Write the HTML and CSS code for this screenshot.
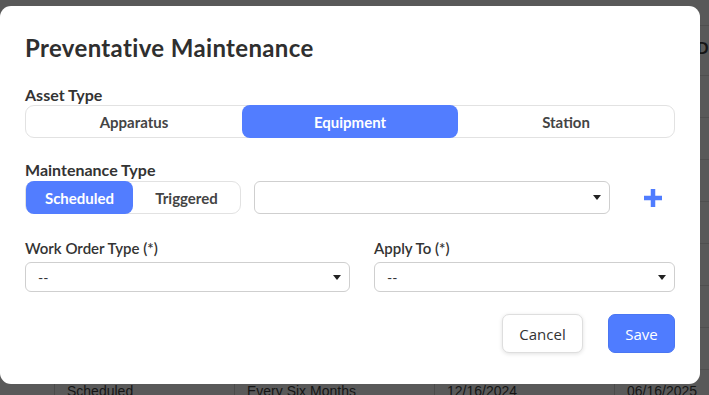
FILE: index.html
```html
<!DOCTYPE html>
<html lang="en">
<head>
    <meta charset="UTF-8">
    <meta name="viewport" content="width=device-width, initial-scale=1.0">
    <title>Preventative Maintenance</title>
    <link rel="stylesheet" href="styles.css">
</head>
<body>
    <!-- Page behind the overlay -->
    <div class="page">
        <div class="grid-head"><span class="head-cell">Due</span></div>
        <div class="grid-row"></div>
        <div class="grid-row"></div>
        <div class="grid-row"></div>
        <div class="grid-row"></div>
        <div class="grid-row"></div>
        <div class="grid-row"></div>
        <div class="grid-row"></div>
        <div class="grid-row data-row">
            <span class="cell c0"></span>
            <span class="cell c1">Scheduled</span>
            <span class="cell c2">Every Six Months</span>
            <span class="cell c3">12/16/2024</span>
            <span class="cell c4">06/16/2025</span>
        </div>
    </div>

    <div class="modal">
        <h2 class="modal-title">Preventative Maintenance</h2>

        <label class="field-label first">Asset Type</label>
        <div class="segmented">
            <button class="seg">Apparatus</button>
            <button class="seg active">Equipment</button>
            <button class="seg">Station</button>
        </div>

        <label class="field-label second">Maintenance Type</label>
        <div class="maint-row">
            <div class="segmented small">
                <button class="seg active">Scheduled</button>
                <button class="seg">Triggered</button>
            </div>
            <div class="select wide"><span></span><i class="caret"></i></div>
            <button class="add-btn" title="Add">
                <svg width="20" height="20" viewBox="0 0 20 20">
                    <path d="M10 1 V19 M1 10 H19" stroke="#4f7cff" stroke-width="4.5" fill="none"/>
                </svg>
            </button>
        </div>

        <div class="two-col">
            <div>
                <label class="field-label third">Work Order Type (*)</label>
                <div class="select"><span>--</span><i class="caret"></i></div>
            </div>
            <div>
                <label class="field-label third">Apply To (*)</label>
                <div class="select"><span>--</span><i class="caret"></i></div>
            </div>
        </div>

        <div class="actions">
            <button class="btn btn-cancel">Cancel</button>
            <button class="btn btn-save">Save</button>
        </div>
    </div>
</body>
</html>
```

FILE: styles.css
```css
/* Global styles */
body {
    margin: 0;
    padding: 0;
    width: 709px;
    height: 395px;
    overflow: hidden;
    background-color: #595959;
    font-family: Lato, "Open Sans", Arial, sans-serif;
    position: relative;
}

/* Background page (under overlay) */
.page {
    padding-top: 25px;
    font-family: "Liberation Sans", Arial, sans-serif;
    color: #151515;
    font-size: 14px;
}

.grid-head {
    height: 49px;
    border-top: 1px solid #4f4f4f;
    border-bottom: 1px solid #4f4f4f;
    position: relative;
}

.head-cell {
    position: absolute;
    left: 697px;
    top: 14px;
    font-size: 16px;
    font-weight: bold;
}

.grid-row {
    height: 41px;
    border-bottom: 1px solid #4f4f4f;
}

.data-row {
    display: flex;
    align-items: flex-end;
}

.cell {
    flex: none;
    box-sizing: border-box;
    height: 30px;
    padding: 1px 12px 0;
    border-left: 1px solid #4a4a4a;
    white-space: nowrap;
    line-height: 18px;
}

.c0 { width: 54px; border-left: none; }
.c1 { width: 180px; }
.c2 { width: 200px; }
.c3 { width: 180px; }
.c4 { width: 120px; }

/* Modal */
.modal {
    position: absolute;
    left: 0;
    top: 6px;
    width: 700px;
    height: 378px;
    box-sizing: border-box;
    padding: 27px 25px 0;
    background-color: #ffffff;
    border-radius: 11px;
    color: #333333;
}

.modal-title {
    margin: 0 0 24px;
    font-size: 24px;
    line-height: 29px;
    font-weight: 700;
    letter-spacing: 0.35px;
    color: #2f2f2f;
}

.field-label {
    display: block;
    font-size: 16px;
    line-height: 18px;
    font-weight: 700;
    color: #333333;
}

.field-label.first { margin-bottom: 1px; }
.field-label.second { margin-top: 23px; margin-bottom: 2px; }
.field-label.third { margin-top: 25px; margin-bottom: 5px; font-size: 15px; font-weight: 600; }

/* Segmented toggle */
.segmented {
    display: flex;
    height: 33px;
    box-sizing: border-box;
    border: 1px solid #e2e2e2;
    border-radius: 9px;
}

.seg {
    flex: 1;
    border: none;
    background: transparent;
    font-family: Lato, Arial, sans-serif;
    font-size: 15px;
    font-weight: 700;
    color: #444444;
    border-radius: 8px;
    margin: -1px 0;
    cursor: pointer;
}

.seg.active {
    background-color: #527dff;
    color: #ffffff;
}

.segmented.small {
    width: 216px;
    flex: none;
}

.maint-row {
    display: flex;
    align-items: center;
    gap: 13px;
}

/* Selects */
.select {
    height: 30px;
    box-sizing: border-box;
    border: 1px solid #cfcfcf;
    border-radius: 6px;
    display: flex;
    align-items: center;
    justify-content: space-between;
    padding: 0 8px 0 12px;
    font-size: 14px;
    color: #333333;
}

.select.wide {
    flex: none;
    width: 356px;
    height: 33px;
}

.caret {
    width: 0;
    height: 0;
    border-left: 4px solid transparent;
    border-right: 4px solid transparent;
    border-top: 5px solid #222222;
}

.add-btn {
    border: none;
    background: transparent;
    padding: 0;
    margin-left: 20px;
    width: 20px;
    height: 33px;
    display: flex;
    align-items: center;
    justify-content: center;
    cursor: pointer;
}

.two-col {
    display: grid;
    grid-template-columns: 325px 301px;
    gap: 24px;
}

/* Footer buttons */
.actions {
    display: flex;
    justify-content: flex-end;
    gap: 25px;
    margin-top: 22px;
}

.btn {
    height: 39px;
    font-family: "Open Sans", "Noto Sans", Arial, sans-serif;
    font-size: 15px;
    border-radius: 7px;
    cursor: pointer;
}

.btn-cancel {
    width: 81px;
    background-color: #ffffff;
    border: 1px solid #dedede;
    color: #333333;
    box-shadow: 0 1px 4px rgba(0, 0, 0, 0.12);
}

.btn-save {
    width: 67px;
    background-color: #4f7cff;
    border: 1px solid #4a76f2;
    color: #ffffff;
}
```
